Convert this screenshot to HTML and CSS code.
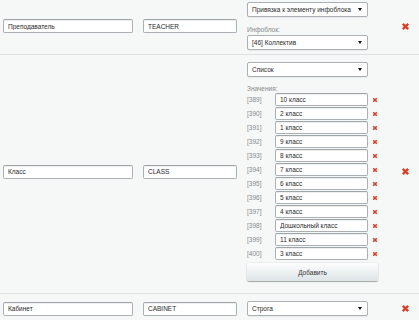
FILE: index.html
```html
<!DOCTYPE html>
<html>
<head>
<meta charset="utf-8">
<link rel="stylesheet" href="styles.css">
</head>
<body>
<div class="table">
  <div class="row row-first">
    <input class="inp name" value="Преподаватель">
    <input class="inp code" value="TEACHER">
    <div class="opts">
      <div class="sel">Привязка к элементу инфоблока<span class="arrow"></span></div>
      <div class="lbl lbl-iblock">Инфоблок:</div>
      <div class="sel">[46] Коллектив<span class="arrow"></span></div>
    </div>
    <svg class="del" viewBox="0 0 10 10"><path d="M2 2 L8 8 M8 2 L2 8"/></svg>
  </div>
  <div class="row row-list">
    <input class="inp name" value="Класс">
    <input class="inp code" value="CLASS">
    <div class="opts">
      <div class="sel">Список<span class="arrow"></span></div>
      <div class="lbl lbl-values">Значения:</div>
      <div class="vals">
        <div class="val"><span class="vid">[389]</span><input class="inp vin" value="10 класс"><svg class="del-s" viewBox="0 0 10 10"><path d="M2 2 L8 8 M8 2 L2 8"/></svg></div>
        <div class="val"><span class="vid">[390]</span><input class="inp vin" value="2 класс"><svg class="del-s" viewBox="0 0 10 10"><path d="M2 2 L8 8 M8 2 L2 8"/></svg></div>
        <div class="val"><span class="vid">[391]</span><input class="inp vin" value="1 класс"><svg class="del-s" viewBox="0 0 10 10"><path d="M2 2 L8 8 M8 2 L2 8"/></svg></div>
        <div class="val"><span class="vid">[392]</span><input class="inp vin" value="9 класс"><svg class="del-s" viewBox="0 0 10 10"><path d="M2 2 L8 8 M8 2 L2 8"/></svg></div>
        <div class="val"><span class="vid">[393]</span><input class="inp vin" value="8 класс"><svg class="del-s" viewBox="0 0 10 10"><path d="M2 2 L8 8 M8 2 L2 8"/></svg></div>
        <div class="val"><span class="vid">[394]</span><input class="inp vin" value="7 класс"><svg class="del-s" viewBox="0 0 10 10"><path d="M2 2 L8 8 M8 2 L2 8"/></svg></div>
        <div class="val"><span class="vid">[395]</span><input class="inp vin" value="6 класс"><svg class="del-s" viewBox="0 0 10 10"><path d="M2 2 L8 8 M8 2 L2 8"/></svg></div>
        <div class="val"><span class="vid">[396]</span><input class="inp vin" value="5 класс"><svg class="del-s" viewBox="0 0 10 10"><path d="M2 2 L8 8 M8 2 L2 8"/></svg></div>
        <div class="val"><span class="vid">[397]</span><input class="inp vin" value="4 класс"><svg class="del-s" viewBox="0 0 10 10"><path d="M2 2 L8 8 M8 2 L2 8"/></svg></div>
        <div class="val"><span class="vid">[398]</span><input class="inp vin" value="Дошкольный класс"><svg class="del-s" viewBox="0 0 10 10"><path d="M2 2 L8 8 M8 2 L2 8"/></svg></div>
        <div class="val"><span class="vid">[399]</span><input class="inp vin" value="11 класс"><svg class="del-s" viewBox="0 0 10 10"><path d="M2 2 L8 8 M8 2 L2 8"/></svg></div>
        <div class="val"><span class="vid">[400]</span><input class="inp vin" value="3 класс"><svg class="del-s" viewBox="0 0 10 10"><path d="M2 2 L8 8 M8 2 L2 8"/></svg></div>
      </div>
      <button class="btn">Добавить</button>
    </div>
    <svg class="del" viewBox="0 0 10 10"><path d="M2 2 L8 8 M8 2 L2 8"/></svg>
  </div>
  <div class="row row-last">
    <input class="inp name" value="Кабинет">
    <input class="inp code" value="CABINET">
    <div class="opts">
      <div class="sel">Строга<span class="arrow"></span></div>
    </div>
    <svg class="del" viewBox="0 0 10 10"><path d="M2 2 L8 8 M8 2 L2 8"/></svg>
  </div>
</div>
</body>
</html>
```

FILE: styles.css
```css
html, body {
  margin: 0;
  padding: 0;
  background: #f6f8f8;
  font-family: "Liberation Sans", Arial, sans-serif;
  font-size: 6.5px;
  color: #2a2a2a;
  overflow: hidden;
}

.table {
  width: 419px;
}

.row {
  display: grid;
  grid-template-columns: 130px 94px 131px 1fr;
  column-gap: 10px;
  align-items: center;
  padding-left: 3px;
  border-bottom: 1px solid #dde1e2;
}

.row-first {
  padding-top: 2px;
  padding-bottom: 4px;
}

.row-list {
  padding-top: 7px;
  padding-bottom: 12px;
}

.row-last {
  padding-top: 7px;
  padding-bottom: 7px;
  border-bottom: none;
}

.inp {
  box-sizing: border-box;
  height: 14px;
  margin: 0;
  padding: 0 4px;
  border: 1px solid #aab0b3;
  border-top-color: #9ea5a8;
  border-radius: 2px;
  background: #fff;
  box-shadow: inset 0 1px 1px rgba(0, 0, 0, 0.07);
  font-family: "Liberation Sans", Arial, sans-serif;
  font-size: 6.5px;
  color: #2a2a2a;
  outline: none;
}

.name {
  width: 130px;
}

.code {
  width: 94px;
}

.opts {
  display: flex;
  flex-direction: column;
  align-items: flex-start;
}

.sel {
  box-sizing: border-box;
  position: relative;
  width: 121px;
  height: 15px;
  line-height: 13px;
  padding: 0 4px;
  border: 1px solid #aab0b3;
  border-radius: 2px;
  background: #fff;
  box-shadow: 0 1px 1px rgba(0, 0, 0, 0.06);
  white-space: nowrap;
  overflow: hidden;
}

.arrow {
  position: absolute;
  right: 5px;
  top: 5px;
  width: 0;
  height: 0;
  border-left: 2px solid transparent;
  border-right: 2px solid transparent;
  border-top: 3px solid #111;
}

.lbl {
  color: #858889;
  line-height: 10px;
}

.lbl-iblock {
  margin-top: 8px;
}

.lbl-values {
  margin-top: 7px;
  line-height: 9px;
}

.vals {
  display: flex;
  flex-direction: column;
  gap: 1px;
}

.val {
  display: flex;
  align-items: center;
  height: 13px;
}

.vid {
  width: 28px;
  color: #858889;
}

.vin {
  width: 93px;
  height: 13px;
}

.del-s {
  width: 6px;
  height: 6px;
  margin-left: 4px;
  fill: none;
  stroke: #d6402a;
  stroke-width: 2.6;
}

.btn {
  box-sizing: border-box;
  width: 131px;
  height: 18px;
  margin-top: 3px;
  padding: 0;
  border: none;
  border-radius: 2px;
  background: linear-gradient(#fdfefe, #dde4e6);
  box-shadow: 0 1px 1px rgba(0, 0, 0, 0.3), 0 0 0 1px rgba(0, 0, 0, 0.04);
  font-family: "Liberation Sans", Arial, sans-serif;
  font-size: 6.5px;
  color: #333;
}

.del {
  width: 9px;
  height: 9px;
  margin-left: 13px;
  fill: none;
  stroke: #d6402a;
  stroke-width: 2.6;
}
```
